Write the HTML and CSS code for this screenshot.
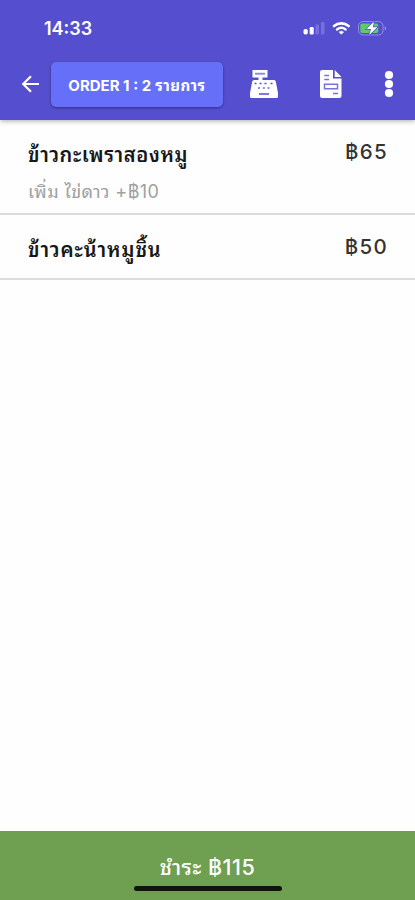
FILE: index.html
```html
<!DOCTYPE html>
<html lang="th">
<head>
<meta charset="utf-8">
<meta name="viewport" content="width=device-width, initial-scale=1">
<title>Order</title>
<link rel="stylesheet" href="styles.css">
</head>
<body>
<div class="app">
  <header class="header">
    <div class="status">
      <span class="clock">14:33</span>
      <svg class="status-icons" width="84" height="20" viewBox="0 0 84 20" fill="none">
        <rect x="-0.500" y="11" width="4.300" height="5.500" rx="1.800" fill="#fff"/>
        <rect x="5.700" y="9" width="4" height="7.500" rx="1.200" fill="#fff"/>
        <rect x="11.500" y="6.500" width="3.500" height="10" rx="1" fill="#7470dc"/>
        <rect x="17" y="4" width="3.500" height="12.500" rx="1" fill="#7470dc"/>
        <path d="M30 8a11.500 11.500 0 0 1 14.600 0" stroke="#fff" stroke-width="2.700" stroke-linecap="round"/>
        <path d="M33 11.500a7 7 0 0 1 8.600 0" stroke="#fff" stroke-width="2.400" stroke-linecap="round"/>
        <path d="M35 14q2.300-1.700 4.600 0l-2.300 2.300z" fill="#fff" stroke="#fff" stroke-width=".6"/>
        <rect x="54.500" y="3.500" width="24.500" height="13.500" rx="4.500" stroke="#918ee2"/>
        <path d="M80.800 8q2.500 2.300 0 4.600z" fill="#aaa7e9"/>
        <rect x="56.300" y="5.500" width="18" height="9.500" rx="2" fill="#5dcb67"/>
        <path d="M70 3.500L62.500 11h4.600l-2 6 8.200-7.800h-4.500z" fill="#fff" stroke="#554fcf" stroke-width="1.400" paint-order="stroke"/>
      </svg>
    </div>
    <div class="toolbar">
      <svg class="back" width="20" height="20" viewBox="0 0 20 20" fill="none" stroke="#fff" stroke-width="2.200"><path d="M19 10H3M11 2.200L3.200 10l7.800 7.800"/></svg>
      <button class="order"><span class="order-text">ORDER 1 : 2 <span class="order-unit">รายการ</span></span></button>
      <svg class="register" width="28" height="30" viewBox="0 0 28 30">
        <path fill="#fff" d="M2.500 1h15v7.500h-5V11h11.500q1.500 0 1.800 1.500L28 24v3.500q0 1.500-1.500 1.500h-25Q0 29 0 27.500V24l2.200-11.500Q2.500 11 4 11h4.500V8.500h-6z"/>
        <path stroke="#554fcf" fill="none" stroke-width="1.500" d="M9 25h10M4.500 14.500h2M9.500 14.500h2M14.500 14.500h2M20.500 14.500h2"/>
        <path stroke="#918ee2" stroke-width="2" d="M5 4.700h10M8 19h2M12.800 19h2M17.500 19h2"/>
      </svg>
      <svg class="document" width="22" height="30" viewBox="0 0 22 30">
        <path fill="#fff" d="M2 1h11v8.500h8.500V27q0 2-2 2H2q-2 0-2-2V3q0-2 2-2zM14.700 1l6.800 7h-6.800z"/>
        <path stroke="#7773d9" fill="none" stroke-width="1.500" d="M4.300 6.500h4.700M4.300 10.500h4.700M13 24.500h5M4.500 15.200h13v4.600h-13z"/>
      </svg>
      <svg class="more" width="10" height="28" viewBox="0 0 10 28" fill="#fff"><circle cx="5" cy="5" r="4.100"/><circle cx="5" cy="14" r="4.100"/><circle cx="5" cy="23" r="4.100"/></svg>
    </div>
  </header>
  <main class="items">
    <section class="item item-large">
      <div class="description"><div class="name name-first">ข้าวกะเพราสองหมู</div><div class="extra">เพิ่ม ไข่ดาว +฿10</div></div>
      <div class="price">฿65</div>
    </section>
    <section class="item item-small">
      <div class="description"><div class="name name-second">ข้าวคะน้าหมูชิ้น</div></div>
      <div class="price">฿50</div>
    </section>
  </main>
  <footer class="pay"><span class="pay-text">ชำระ ฿115</span><div class="home-bar"></div></footer>
</div>
</body>
</html>
```
FILE: styles.css
```css
* { box-sizing: border-box; }
body { margin: 0; font-family: Inter, "Noto Sans Thai Looped", Loma, Garuda, Waree, Umpush, "Noto Sans Thai", "Noto Sans", sans-serif; }
.app { height: 900px; display: flex; flex-direction: column; background: #fefefe; overflow: hidden; }
.header { height: 120px; flex-shrink: 0; background: #554fcf; box-shadow: 0 1px 5px #0005; color: #fff; }
.status { height: 56px; display: flex; align-items: center; justify-content: space-between; padding: 0 27px 0 44px; }
.status-icons { overflow: visible; }
.clock { font-size: 18px; font-weight: 600; }
.toolbar { height: 56px; display: flex; align-items: center; padding: 0 0 0 20px; }
.back { flex-shrink: 0; }
.order { width: 172px; height: 45px; margin-left: 11px; border: 0; padding: 0; border-radius: 5px; background: #656ff7; color: #fff; font-family: inherit; font-size: 15px; font-weight: 700; white-space: nowrap; box-shadow: 0 1px 3px #0006; }
.order-unit { letter-spacing: 0.500px; margin-left: 0.500px; }
.register { margin-left: 27px; }
.document { margin-left: 42px; }
.more { margin-left: 42px; }
.items { flex: 1; }
.item { display: flex; justify-content: space-between; padding: 0 28px; border-bottom: 2px solid #dcdcde; }
.item-large { height: 95px; padding-top: 20px; }
.item-small { height: 65px; padding-top: 20px; }
.name { font-size: 20px; line-height: 30px; font-weight: 600; color: #171717; white-space: nowrap; }
.name-first { letter-spacing: 0.600px; }
.name-second { letter-spacing: 0.900px; }
.extra { margin-top: 9px; font-size: 18px; line-height: 26px; letter-spacing: 0.400px; color: #a0a0a0; white-space: nowrap; }
.price { font-size: 20.500px; line-height: 24px; font-weight: 500; letter-spacing: 1.300px; margin-right: -1px; color: #333; }
.pay { height: 69px; flex-shrink: 0; display: flex; flex-direction: column; align-items: center; padding-top: 21px; background: #6f9f50; color: #fff; }
.pay-text { font-size: 21.500px; line-height: 30px; font-weight: 500; letter-spacing: 0.500px; white-space: nowrap; }
.home-bar { width: 148px; height: 5px; margin-top: 4px; border-radius: 3px; background: #10140d; }
```
